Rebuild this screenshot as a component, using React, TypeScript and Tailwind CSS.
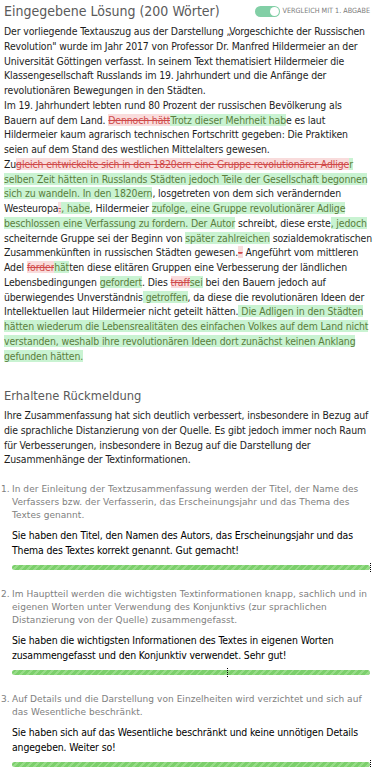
import React from "react";

type Seg = { t: string; k?: "del" | "ins" };

// segments of the submitted text, del = removed, ins = added vs 1st submission
const text: Seg[][] = [
  [
    {
      t: "Der vorliegende Textauszug aus der Darstellung „Vorgeschichte der Russischen Revolution\" wurde im Jahr 2017 von Professor Dr. Manfred Hildermeier an der Universität Göttingen verfasst. In seinem Text thematisiert Hildermeier die Klassengesellschaft Russlands im 19. Jahrhundert und die Anfänge der revolutionären Bewegungen in den Städten.",
    },
  ],
  [
    { t: "Im 19. Jahrhundert lebten rund 80 Prozent der russischen Bevölkerung als Bauern auf dem Land. " },
    { t: "Dennoch hätt", k: "del" },
    { t: "Trotz dieser Mehrheit hab", k: "ins" },
    { t: "e es laut Hildermeier kaum agrarisch technischen Fortschritt gegeben: Die Praktiken seien auf dem Stand des westlichen Mittelalters gewesen." },
  ],
  [
    { t: "Zu" },
    { t: "gleich entwickelte sich in den 1820ern eine Gruppe revolutionärer Adlige", k: "del" },
    { t: "r selben Zeit hätten in Russlands Städten jedoch Teile der Gesellschaft begonnen sich zu wandeln. In den 1820ern", k: "ins" },
    { t: ", losgetreten von dem sich verändernden Westeuropa" },
    { t: ".", k: "del" },
    { t: ", habe", k: "ins" },
    { t: ", Hildermeier " },
    { t: "zufolge, eine Gruppe revolutionärer Adlige beschlossen eine Verfassung zu fordern. Der Autor", k: "ins" },
    { t: " schreibt, diese erste" },
    { t: ", jedoch", k: "ins" },
    { t: " scheiternde Gruppe sei der Beginn von " },
    { t: "später zahlreichen", k: "ins" },
    { t: " sozialdemokratischen Zusammenkünften in russischen Städten gewesen." },
    { t: "–", k: "del" },
    { t: " Angeführt vom mittleren Adel " },
    { t: "forder", k: "del" },
    { t: "hät", k: "ins" },
    { t: "ten diese elitären Gruppen eine Verbesserung der ländlichen Lebensbedingungen " },
    { t: "gefordert", k: "ins" },
    { t: ". Dies " },
    { t: "traff", k: "del" },
    { t: "sei", k: "ins" },
    { t: " bei den Bauern jedoch auf überwiegendes Unverständnis" },
    { t: " getroffen", k: "ins" },
    { t: ", da diese die revolutionären Ideen der Intellektuellen laut Hildermeier nicht geteilt hätten." },
    { t: " ", k: "ins" },
    {
      t: "Die Adligen in den Städten hätten wiederum die Lebensrealitäten des einfachen Volkes auf dem Land nicht verstanden, weshalb ihre revolutionären Ideen dort zunächst keinen Anklang gefunden hätten.",
      k: "ins",
    },
  ],
];

const criteria = [
  {
    q: "In der Einleitung der Textzusammenfassung werden der Titel, der Name des Verfassers bzw. der Verfasserin, das Erscheinungsjahr und das Thema des Textes genannt.",
    a: "Sie haben den Titel, den Namen des Autors, das Erscheinungsjahr und das Thema des Textes korrekt genannt. Gut gemacht!",
    mark: 100,
  },
  {
    q: "Im Hauptteil werden die wichtigsten Textinformationen knapp, sachlich und in eigenen Worten unter Verwendung des Konjunktivs (zur sprachlichen Distanzierung von der Quelle) zusammengefasst.",
    a: "Sie haben die wichtigsten Informationen des Textes in eigenen Worten zusammengefasst und den Konjunktiv verwendet. Sehr gut!",
    mark: 60,
  },
  {
    q: "Auf Details und die Darstellung von Einzelheiten wird verzichtet und sich auf das Wesentliche beschränkt.",
    a: "Sie haben sich auf das Wesentliche beschränkt und keine unnötigen Details angegeben. Weiter so!",
    mark: 100,
  },
];

function DiffText() {
  return (
    <div className="text-[10.4px] leading-[14.75px] tracking-[-0.12px] text-[#1d1d1d]">
      {text.map((para, i) => (
        <p key={i}>
          {para.map((s, j) =>
            s.k === "del" ? (
              <span key={j} className="bg-[#f9dcdc] text-[#d04a4a] line-through">
                {s.t}
              </span>
            ) : s.k === "ins" ? (
              <span key={j} className="bg-[#c9f3d2] text-[#5b7d3c]">
                {s.t}
              </span>
            ) : (
              <span key={j}>{s.t}</span>
            )
          )}
        </p>
      ))}
    </div>
  );
}

function ScoreBar({ mark }: { mark: number }) {
  return (
    <div className="relative mt-[8px] h-[5px] w-full">
      <div className="h-[5px] w-full rounded-full bg-[#7ccf6c] bg-[repeating-linear-gradient(135deg,#7ccf6c_0px,#7ccf6c_3px,#97dc88_3px,#97dc88_5px)]" />
      <div
        className="absolute top-[-2px] h-[9px] border-l border-dotted border-black"
        style={{ left: `${mark}%` }}
      />
    </div>
  );
}

export default function App() {
  return (
    <div className="w-[381px] border-b border-[#c8c8c8] bg-white pl-[4px] pr-[8px] pb-[4px] font-['DejaVu_Sans_Condensed',sans-serif]">
      <div className="mr-[3px] flex items-center justify-between pt-[1px]">
        <h2 className="text-[14px] leading-[20px] text-[#5a5a5a]">Eingegebene Lösung (200 Wörter)</h2>
        <div className="flex items-center gap-[3px]">
          <div className="flex h-[11px] w-[25px] items-center justify-end rounded-full bg-[#82cfa6] pr-[1px]">
            <div className="h-[9px] w-[9px] rounded-full bg-white" />
          </div>
          <span className="text-[7.2px] text-[#7b7b7b]">VERGLEICH MIT 1. ABGABE</span>
        </div>
      </div>
      <div className="mt-[3px]">
        <DiffText />
      </div>

      <h2 className="mt-[24px] text-[12.8px] leading-[18px] text-[#5a5a5a]">Erhaltene Rückmeldung</h2>
      <p className="mt-[3px] text-[10.4px] leading-[14.7px] tracking-[-0.12px] text-[#1d1d1d]">
        Ihre Zusammenfassung hat sich deutlich verbessert, insbesondere in Bezug auf die sprachliche Distanzierung von der Quelle. Es gibt jedoch immer noch Raum für Verbesserungen, insbesondere in Bezug auf die Darstellung der Zusammenhänge der Textinformationen.
      </p>

      <ol className="mt-[16px] mr-[3px] flex flex-col gap-[18px] font-['DejaVu_Sans',sans-serif]">
        {criteria.map((c, i) => (
          <li key={i} className="ml-[-3px] flex">
            <span className="w-[11px] shrink-0 text-[9px] leading-[13px] tracking-[0.05px] text-[#808080]">{i + 1}.</span>
            <div className="min-w-0 flex-1">
              <div className="text-[9px] leading-[13px] tracking-[0.05px] text-[#808080]">{c.q}</div>
              <div className="mt-[6px] font-['DejaVu_Sans_Condensed',sans-serif] text-[10.4px] leading-[14.5px] tracking-[-0.12px] text-black">{c.a}</div>
              <ScoreBar mark={c.mark} />
            </div>
          </li>
        ))}
      </ol>
    </div>
  );
}
